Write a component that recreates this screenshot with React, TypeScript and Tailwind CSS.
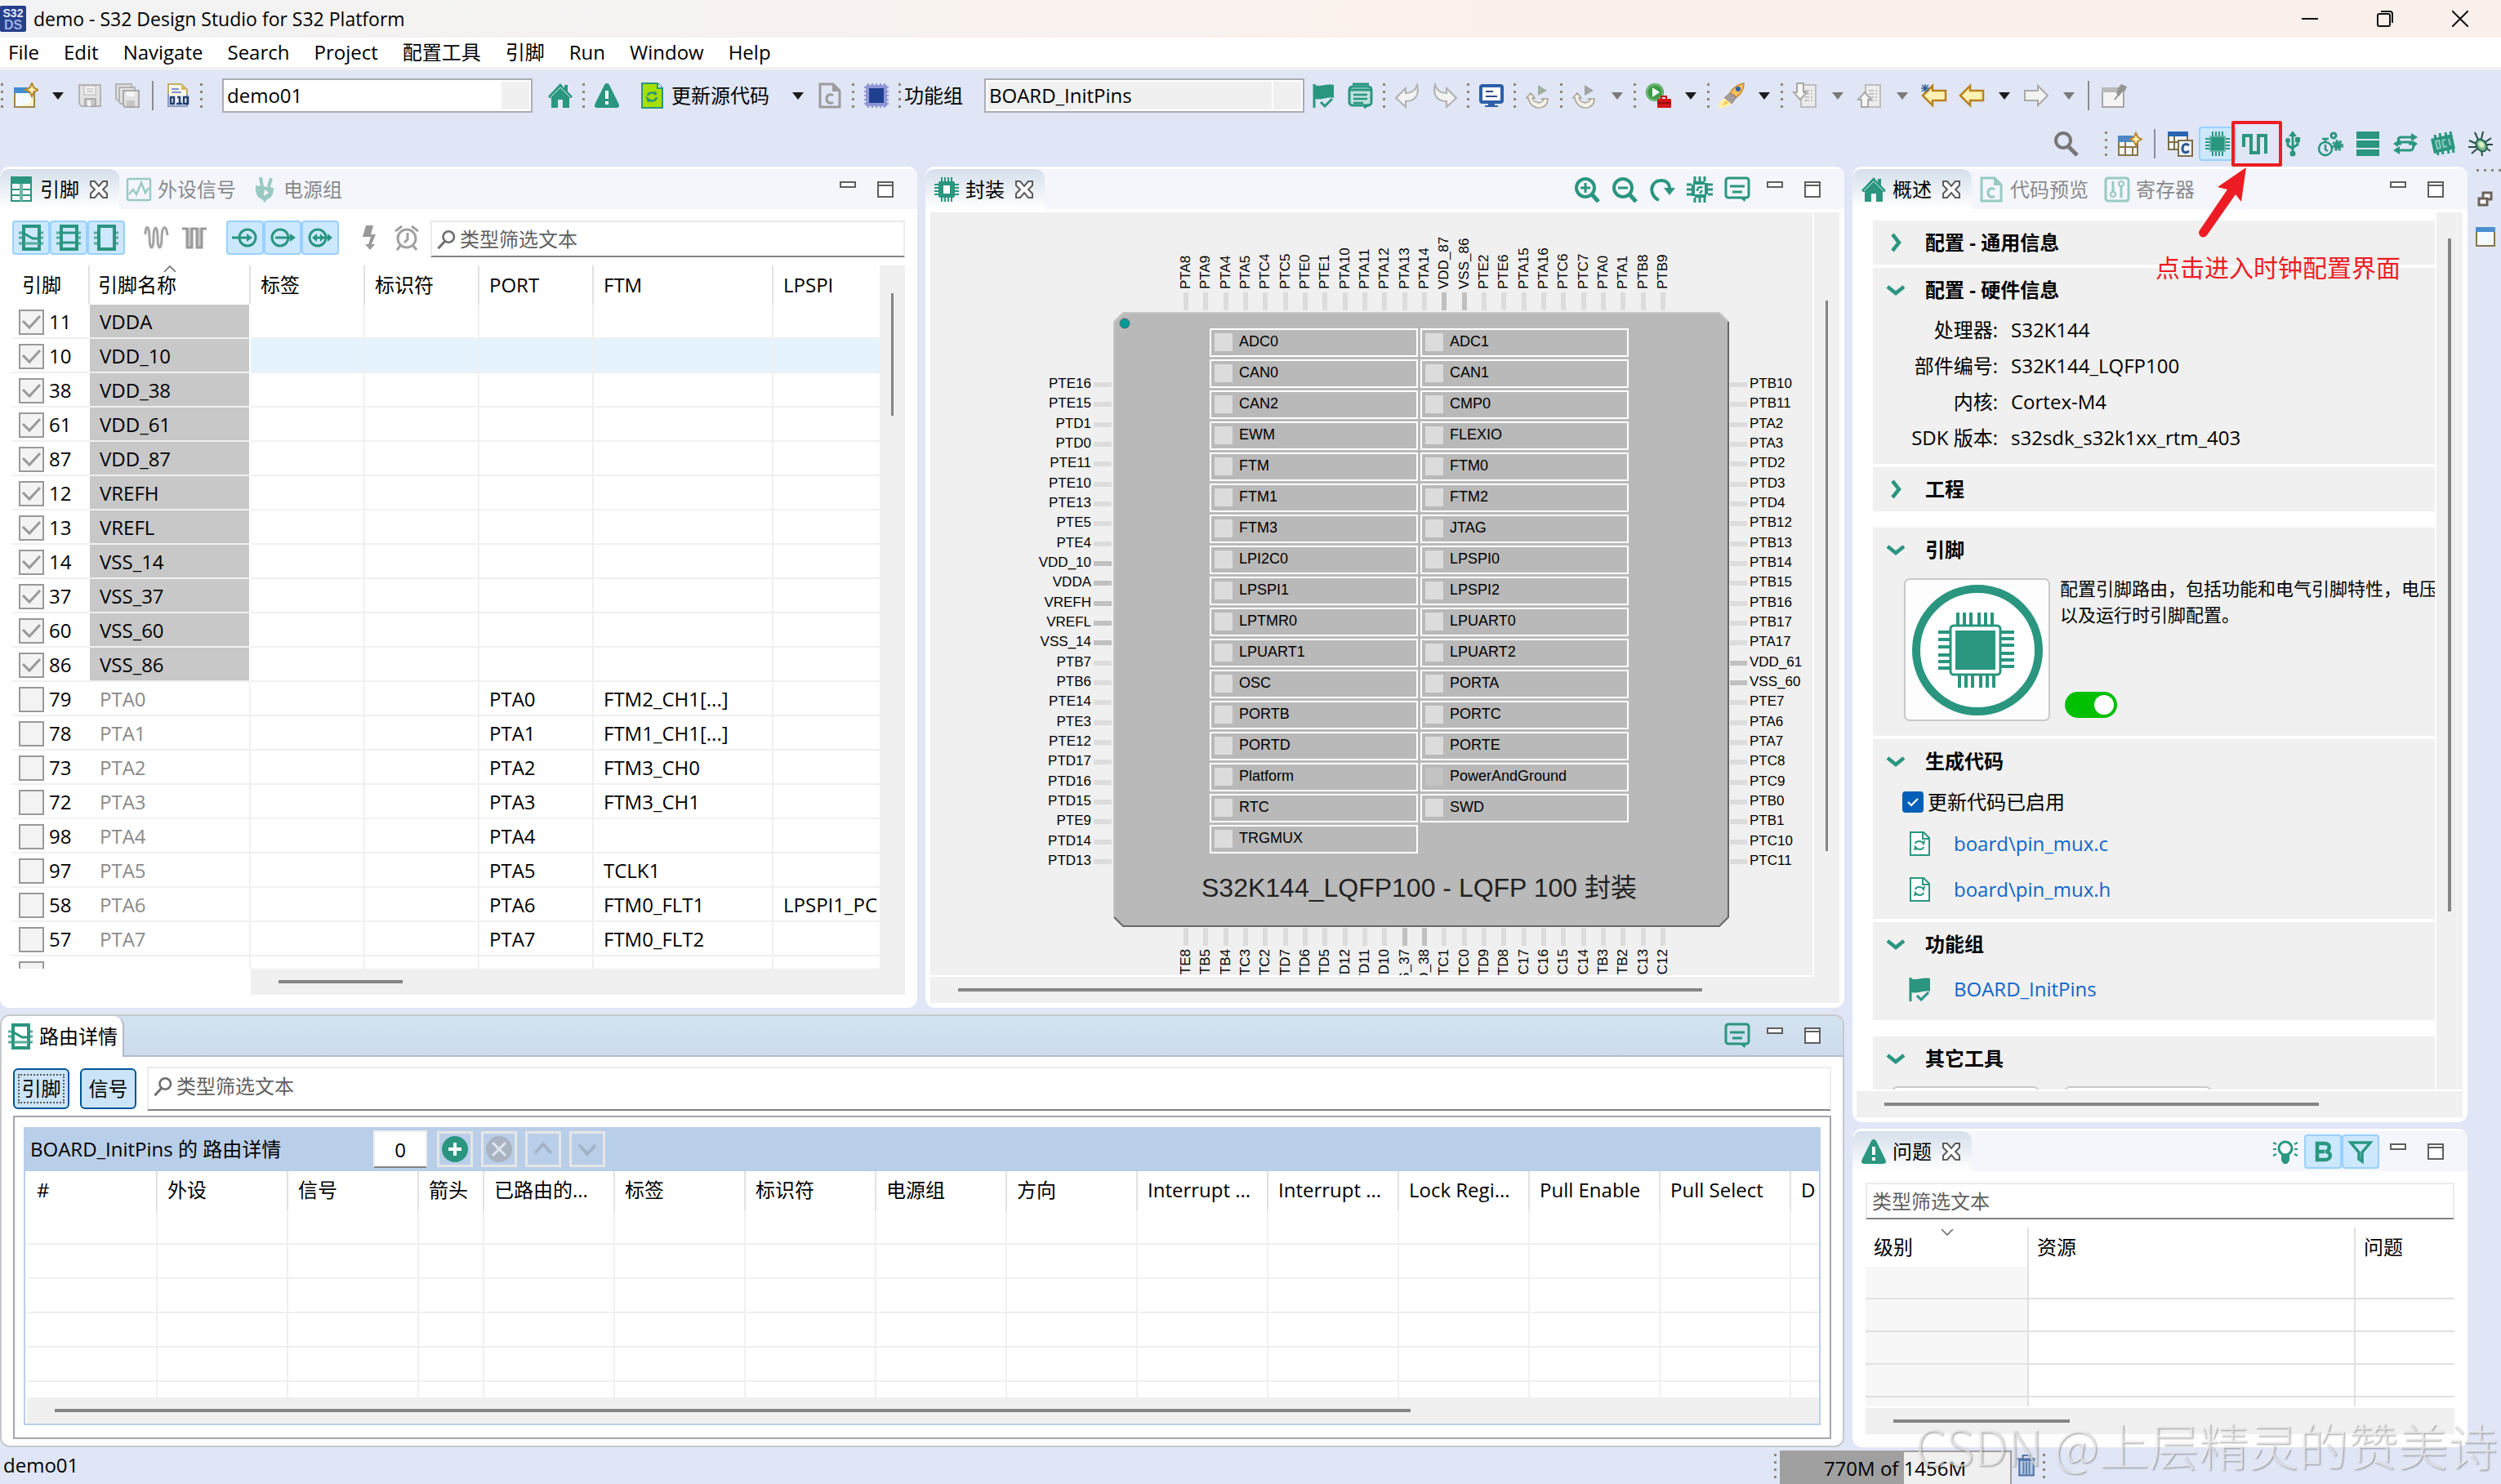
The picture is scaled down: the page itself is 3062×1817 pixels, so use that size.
import React from 'react';

const TEAL = '#2a967f';

interface IconProps {
  children: React.ReactNode;
  className?: string;
}

const Icon: React.FC<IconProps> = ({ children, className = 'size-8' }) => (
  <svg viewBox="0 0 32 32" fill="none" className={`shrink-0 ${className}`} aria-hidden="true">
    {children}
  </svg>
);

/* ---------- icons ---------- */

const AppLogo = () => (
  <svg viewBox="0 0 32 32" className="size-8 shrink-0" aria-hidden="true">
    <rect width="32" height="32" rx="2" fill="#27408b" />
    <text x="16" y="14" fontSize="14" fontWeight="700" fill="#e4eaff" textAnchor="middle" fontFamily="Liberation Sans, sans-serif">S32</text>
    <text x="16" y="29" fontSize="16" fontWeight="700" fill="#9fb0e6" textAnchor="middle" fontFamily="Liberation Sans, sans-serif">DS</text>
  </svg>
);

const NewIcon = () => (
  <Icon>
    <rect x="3" y="7" width="24" height="23" fill="#f4fbff" stroke="#a08648" strokeWidth="2" />
    <rect x="2" y="6" width="26" height="7" fill="#3f8fd0" />
    <path d="M6 29c12 0 19-6 20-15v15z" fill="#fdf3cf" />
    <path d="M24 1l2.500 5.500L32 9l-5.500 2.500L24 17l-2.500-5.500L16 9l5.500-2.500z" fill="#fff0b8" stroke="#b8862a" strokeWidth="2" />
  </Icon>
);

const SaveIcon = () => (
  <Icon>
    <path d="M3 3h26v26H6l-3-3z" fill="#e2e2e2" stroke="#b4b4b4" strokeWidth="2" />
    <rect x="9" y="4" width="14" height="11" fill="#f1f1f1" stroke="#b5b5b5" />
    <path d="M12 8h8M12 11h8" stroke="#c6c6c6" strokeWidth="1.500" />
    <rect x="10" y="20" width="13" height="9" fill="#c9c9c9" stroke="#a0a0a0" strokeWidth="1.500" />
    <rect x="13" y="22" width="4" height="7" fill="#f4f4f4" />
  </Icon>
);

const SaveAllIcon = () => (
  <Icon>
    <path d="M2 2h19v20H4l-2-2z" fill="#e2e2e2" stroke="#b4b4b4" strokeWidth="2" />
    <path d="M6 6h19v20H8l-2-2z" fill="#e2e2e2" stroke="#b4b4b4" strokeWidth="2" />
    <path d="M11 10h19v20H13l-2-2z" fill="#e2e2e2" stroke="#a9a9a9" strokeWidth="2" />
    <rect x="15" y="11" width="10" height="6" fill="#f6f6f6" />
    <rect x="15" y="22" width="10" height="7" fill="#c4c4c4" />
  </Icon>
);

const BinaryIcon = () => (
  <Icon>
    <path d="M4 2h16l7 7v20H4z" fill="#fbf8ea" stroke="#c2ad6c" strokeWidth="2" />
    <path d="M20 2v7h7z" fill="#dcb85c" />
    <path d="M4 14v15h23V14" stroke="#8a9cc0" strokeWidth="2" />
    <path d="M8 8h9M8 12h12" stroke="#7d92c8" strokeWidth="2" />
    <rect x="5" y="16" width="21" height="12" fill="#f2f6ff" />
    <path d="M7 18h4v8H7zM23 18h5v8h-5zM15 18h3v8M14 26h7" stroke="#233f70" strokeWidth="2.500" />
  </Icon>
);

const HomeIcon = () => (
  <Icon>
    <path d="M16 1L1 17l2 2h2v12h8V21h6v10h8V19h2l2-2-6-6V3h-4v4z" fill={TEAL} />
    <path d="M4 18L16 6l12 12" stroke="#dff1ec" strokeWidth="1" />
  </Icon>
);

const WarnIcon = () => (
  <Icon>
    <path d="M16 1c2 0 3 2 4 4l10 20c2 4 1 6-3 6H5c-4 0-5-2-3-6L12 5c1-2 2-4 4-4z" fill={TEAL} />
    <path d="M16 10v10M16 23v4" stroke="#fff" strokeWidth="4" />
  </Icon>
);

const UpdateDocIcon = () => (
  <Icon>
    <path d="M4 1h19l6 6v24H4z" fill="#a6e000" stroke={TEAL} strokeWidth="2" />
    <path d="M23 1v6h6" fill="#fff" stroke={TEAL} strokeWidth="2" />
    <path d="M11 16c1-4 7-5 10-1l-1-4M22 18c-1 5-7 6-11 2l1 4" stroke={TEAL} strokeWidth="2.500" />
  </Icon>
);

const FileCIcon: React.FC<{ color?: string }> = ({ color = '#9c9c9c' }) => (
  <Icon>
    <path d="M4 2h16l8 8v20H4z" stroke={color} strokeWidth="3" />
    <path d="M20 2v8h8" fill={color} stroke={color} strokeWidth="2" />
    <path d="M20 16c-2-2-8-2-8 4s6 6 8 4" stroke={color} strokeWidth="3" />
  </Icon>
);

const BlueChipIcon = () => (
  <Icon>
    <path d="M3 3h26v26H3z" fill="#8f95d6" />
    <path d="M6 1v30M11 1v30M16 1v30M21 1v30M26 1v30M1 6h30M1 11h30M1 16h30M1 21h30M1 26h30" stroke="#8f95d6" strokeWidth="2" />
    <rect x="7" y="7" width="18" height="18" fill="#1f3f8f" />
  </Icon>
);

const FlagIcon = () => (
  <Icon>
    <path d="M5 2v29" stroke={TEAL} strokeWidth="3" />
    <path d="M5 3c8 3 14-2 24 0v16c-8-2-14 3-24 1z" fill={TEAL} />
    <path d="M13 24l5 5 9-9" stroke="#e0e6f6" strokeWidth="6" />
    <path d="M13 24l5 5 9-9" stroke={TEAL} strokeWidth="3" />
  </Icon>
);

const ScrollIcon = () => (
  <Icon>
    <rect x="2" y="5" width="27" height="23" rx="4" fill="#bfe0dc" stroke={TEAL} strokeWidth="3" />
    <path d="M6 2h20M20 31l6-4" stroke={TEAL} strokeWidth="3" />
    <path d="M2 9h27" stroke={TEAL} strokeWidth="3" />
    <path d="M7 15h17M7 20h17M7 25h12" stroke={TEAL} strokeWidth="2.500" />
  </Icon>
);

const UndoIcon = () => (
  <Icon>
    <path d="M2 19L14 7v6c8 0 12-3 14-10 3 12-2 20-14 20v7z" fill="#f2f2f2" stroke="#b0b0b0" strokeWidth="2" />
  </Icon>
);

const RedoIcon = () => (
  <Icon>
    <path d="M30 19L18 7v6C10 13 6 10 4 3 1 15 6 23 18 23v7z" fill="#f2f2f2" stroke="#b0b0b0" strokeWidth="2" />
  </Icon>
);

const MonitorIcon = () => (
  <Icon>
    <rect x="3" y="4" width="26" height="20" rx="2" fill="#fff" stroke="#2e5fa8" strokeWidth="4" />
    <path d="M9 11h9M9 17h14" stroke="#2e4a8c" strokeWidth="2" />
    <path d="M12 26h8v2h4v2H8v-2h4z" fill="#2e5fa8" />
  </Icon>
);

const RelaunchIcon: React.FC<{ tint?: string }> = ({ tint = '#9fb09f' }) => (
  <Icon>
    <path d="M16 3v13l11-6z" fill={tint} />
    <path d="M2 19l5-6 5 6H9c1 6 11 8 14 2l-3-1h8c0 14-20 16-24-1z" fill="#f4f1ea" stroke="#a9a294" strokeWidth="1.500" />
  </Icon>
);

const RunIcon = () => (
  <Icon>
    <circle cx="12" cy="12" r="11" fill="#3f9a46" />
    <circle cx="12" cy="12" r="9.500" stroke="#7fc184" strokeWidth="1.500" />
    <path d="M9 6v12l9-6z" fill="#fff" />
    <path d="M20 20v-3h6v3" stroke="#c81010" strokeWidth="2" />
    <rect x="15" y="20" width="17" height="11" rx="1" fill="#d01818" />
    <path d="M15 25h17" stroke="#7a0c0c" strokeWidth="1.500" />
  </Icon>
);

const RocketIcon = () => (
  <Icon>
    <path d="M14 13C18 6 24 2 31 1c0 7-3 13-9 17z" fill="#f7bd5c" stroke="#c98a2e" strokeWidth="1.500" />
    <path d="M14 13l8 5-6 8-9-7z" fill="#a79c9c" stroke="#857b7b" />
    <path d="M7 19l9 7-7 4-9 2 1-7z" fill="#fff2a8" />
    <path d="M9 22l3 3-8 4z" fill="#f6c843" />
    <circle cx="24" cy="8" r="3" fill="#2f62a0" />
  </Icon>
);

const NextNoteIcon: React.FC<{ up?: boolean }> = ({ up = false }) => (
  <Icon>
    <rect x="11" y="3" width="18" height="27" fill="#ececec" stroke="#bdbdbd" strokeWidth="2" />
    <path d="M15 10h10M15 14h10M15 18h10M15 22h10" stroke="#c4c4c4" strokeWidth="2" strokeDasharray="6 2" />
    {up ? (
      <path d="M10 12l8 9h-4v9H6v-9H2z" fill="#f7f7f7" stroke="#a9a9a9" strokeWidth="2" />
    ) : (
      <path d="M6 1h8v11h4l-8 9-8-9h4z" fill="#f7f7f7" stroke="#a9a9a9" strokeWidth="2" />
    )}
  </Icon>
);

const ArrowIcon: React.FC<{ kind: 'last' | 'back' | 'forward' }> = ({ kind }) => (
  <Icon>
    {kind === 'forward' ? (
      <path d="M30 16L18 4v6H2v12h16v6z" fill="#f2f2f2" stroke="#a9a9a9" strokeWidth="2" />
    ) : (
      <path d="M2 16L14 4v6h16v12H14v6z" fill="#fff1b4" stroke="#b8821c" strokeWidth="2.500" />
    )}
    {kind === 'last' && <path d="M5 2v10M0 7h10M1 3l8 8M9 3l-8 8" stroke="#35608f" strokeWidth="1.500" />}
  </Icon>
);

const PinWindowIcon = () => (
  <Icon>
    <rect x="2" y="7" width="26" height="23" fill="#f4f4f4" stroke="#a6a6a6" strokeWidth="2" />
    <rect x="1" y="6" width="28" height="6" fill="#b9b9b9" />
    <path d="M25 2l7 3-2 5-4 2-4 5-3-4 2-6z" fill="#949494" />
    <path d="M23 13l-6 8" stroke="#949494" strokeWidth="2" />
  </Icon>
);

const SearchIcon = () => (
  <Icon>
    <circle cx="12" cy="12" r="9" stroke="#777" strokeWidth="4" />
    <path d="M18 19l11 11" stroke="#777" strokeWidth="5" />
  </Icon>
);

const OpenPerspectiveIcon = () => (
  <Icon>
    <rect x="3" y="8" width="23" height="22" fill="#f4fbff" stroke="#8a744a" strokeWidth="2" />
    <rect x="2" y="6" width="18" height="8" fill="#4b88c8" />
    <path d="M3 20h23M11 14v16M20 20v10" stroke="#8a744a" strokeWidth="2" />
    <path d="M24 3l2.500 5L31 10.500 26.500 13 24 18l-2.500-5L17 10.500 21.500 8z" fill="#fff0b8" stroke="#b8862a" strokeWidth="2" />
  </Icon>
);

const CPerspectiveIcon = () => (
  <Icon>
    <rect x="2" y="2" width="23" height="21" fill="#f4fbff" stroke="#7c6c4a" strokeWidth="2" />
    <rect x="1" y="1" width="25" height="6" fill="#2765b0" />
    <path d="M2 14h12M9 7v16" stroke="#7c6c4a" strokeWidth="2" />
    <rect x="14" y="12" width="17" height="19" fill="#eef5ff" stroke="#7c6c4a" strokeWidth="2" />
    <path d="M27 18c-4-3-8-1-8 4s4 6 8 3" stroke="#2b5590" strokeWidth="3" />
  </Icon>
);

const ChipIcon: React.FC<{ hollow?: boolean }> = ({ hollow = false }) => (
  <Icon>
    <path d="M10 1v30M14 1v30M18 1v30M22 1v30M1 10h30M1 14h30M1 18h30M1 22h30" stroke={TEAL} strokeWidth="2" />
    <rect x="6" y="6" width="20" height="20" rx="2" fill={TEAL} />
    {hollow ? (
      <rect x="12" y="11" width="8" height="10" fill="#fff" />
    ) : (
      <rect x="7" y="7" width="18" height="18" stroke="#9ad0d0" strokeWidth="1" />
    )}
  </Icon>
);

const SquareWaveIcon = () => (
  <Icon>
    <path d="M2 20V6h9v21h9V6h9v22" stroke={TEAL} strokeWidth="4" />
  </Icon>
);

const UsbIcon = () => (
  <Icon>
    <path d="M16 4v22M10 13v5l6 4M22 11v6l-6 4" stroke={TEAL} strokeWidth="3" />
    <path d="M11 7l5-7 5 7z" fill={TEAL} />
    <circle cx="16" cy="28" r="3.500" fill={TEAL} />
    <circle cx="10" cy="12" r="3" fill={TEAL} />
    <rect x="19" y="8" width="6" height="6" fill={TEAL} />
  </Icon>
);

const ClockGearIcon = () => (
  <Icon>
    <circle cx="10" cy="22" r="8" stroke={TEAL} strokeWidth="2.500" />
    <path d="M10 17v6l3 2M6 10h8M10 9v5" stroke={TEAL} strokeWidth="2.500" />
    <circle cx="25" cy="18" r="5" fill={TEAL} />
    <circle cx="25" cy="18" r="6" stroke={TEAL} strokeWidth="2" strokeDasharray="3 2" />
    <circle cx="20" cy="6" r="3" stroke={TEAL} strokeWidth="3" />
  </Icon>
);

const BarsIcon = () => (
  <Icon>
    <path d="M2 1h28v9H2zM2 12h28v9H2zM2 23h28v8H2z" fill={TEAL} />
  </Icon>
);

const RouteIcon = () => (
  <Icon>
    <path d="M26 8H11c-5 0-5 6 0 6h11c5 0 5 10 0 10H6M4 16h7M20 16h6" stroke={TEAL} strokeWidth="3" />
    <path d="M23 3l8 5-8 5zM9 19l-8 5 8 5zM25 12l6 4-6 5zM7 12l-6 4 6 4z" fill={TEAL} />
  </Icon>
);

const MemoryIcon = () => (
  <Icon>
    <path d="M6 5l4 25M12 3l4 26M19 2l4 26M25 1l4 26" stroke={TEAL} strokeWidth="3" />
    <path d="M1 10l26-6 4 18-26 6z" fill={TEAL} />
    <path d="M7 13l2 9 4-1-2-9zM15 12l2 8 4-1M15 12l4-1M23 10l2 8" stroke="#8fcabc" strokeWidth="2" />
  </Icon>
);

const BugIcon = () => (
  <Icon>
    <path d="M2 12l9 4M1 20h10M5 28l7-6M9 2l4 9M19 1l-2 9M29 9l-9 6M31 17H21M28 25l-7-5M18 31l-1-8" stroke="#2c4a44" strokeWidth="2" />
    <ellipse cx="17" cy="18" rx="6" ry="8" transform="rotate(-35 17 18)" fill="#7fb98a" stroke="#1d6152" strokeWidth="2" />
    <ellipse cx="17" cy="17" rx="3" ry="4" transform="rotate(-35 17 17)" fill="#dcf0c8" />
  </Icon>
);

const GridTabIcon = () => (
  <Icon>
    <rect x="4" y="2" width="24" height="28" fill="#fff" stroke={TEAL} strokeWidth="2" />
    <rect x="3" y="0" width="26" height="9" fill={TEAL} />
    <path d="M3 16h26M3 23h26" stroke={TEAL} strokeWidth="2" />
    <path d="M16 9v21" stroke="#6fb8a8" strokeWidth="4" />
  </Icon>
);

const SignalTabIcon = () => (
  <Icon>
    <rect x="2" y="3" width="28" height="26" rx="2" stroke={TEAL} strokeWidth="2.500" />
    <path d="M4 22l5-6 4 6 6-14 5 12 4-6" stroke={TEAL} strokeWidth="2.500" />
  </Icon>
);

const PlugTabIcon = () => (
  <Icon>
    <path d="M11 1l2 12M24 2l-3 11" stroke={TEAL} strokeWidth="4" />
    <path d="M5 11l22 3c0 8-3 13-8 14l-3 4-3-4C8 27 4 21 5 11z" fill={TEAL} />
    <path d="M16 16l5 4-6 4z" fill="#fff" />
  </Icon>
);

const RegisterTabIcon = () => (
  <Icon>
    <rect x="2" y="2" width="28" height="28" rx="3" stroke={TEAL} strokeWidth="3" />
    <path d="M11 6v14M21 12v14" stroke={TEAL} strokeWidth="3" />
    <circle cx="11" cy="22" r="3" stroke={TEAL} strokeWidth="2" />
    <circle cx="21" cy="9" r="3" stroke={TEAL} strokeWidth="2" />
  </Icon>
);

const RouteBoxIcon: React.FC<{ kind: 'routed' | 'all' | 'none' }> = ({ kind }) => (
  <Icon>
    <path d="M1 10h6M1 16h6M1 23h6M25 10h6M25 16h6M25 23h6" stroke="#55ac9a" strokeWidth="3" />
    <rect x="7" y="2" width="19" height="28" stroke={TEAL} strokeWidth="4" />
    {kind === 'routed' && (
      <>
        <path d="M8 23h18" stroke="#55ac9a" strokeWidth="3" />
        <path d="M6 10l12 7h8" stroke={TEAL} strokeWidth="3" />
      </>
    )}
    {kind === 'all' && <path d="M7 10h19M7 22h19" stroke={TEAL} strokeWidth="3" />}
  </Icon>
);

const SineIcon = () => (
  <Icon>
    <path d="M2 12c0-12 5-12 5 4s5 16 5 0 5-16 5 0 5 16 5 0 6-16 7-3" stroke="#a3a3a3" strokeWidth="3" />
  </Icon>
);

const GreyWaveIcon = () => (
  <Icon>
    <path d="M7 4h5v25H7zM19 4h6v25h-6z" fill="#c4c4c4" />
    <path d="M1 5h6v23h6V5h6v23h6V5h6" stroke="#999" strokeWidth="3" />
  </Icon>
);

const DirectionIcon: React.FC<{ kind: 'in' | 'out' | 'both' }> = ({ kind }) => (
  <Icon>
    <circle cx={kind === 'in' ? 19 : 13} cy="16" r="10" stroke={TEAL} strokeWidth="3" />
    {kind === 'in' && (
      <>
        <path d="M0 16h21" stroke={TEAL} strokeWidth="3" />
        <path d="M18 11l7 5-7 5z" fill={TEAL} />
      </>
    )}
    {kind === 'out' && (
      <>
        <path d="M7 16h20" stroke={TEAL} strokeWidth="3" />
        <path d="M25 11l7 5-7 5z" fill={TEAL} />
      </>
    )}
    {kind === 'both' && (
      <>
        <path d="M8 16h19" stroke={TEAL} strokeWidth="3" />
        <path d="M25 11l6 5-6 5zM12 11l-6 5 6 5zM16 11l5 5-5 5z" fill={TEAL} />
      </>
    )}
  </Icon>
);

const FlashIcon = () => (
  <Icon>
    <path d="M12 1h9l-3 11h6l-5 12h4l-6 7-6-7h4l3-9H8z" fill="#999" />
  </Icon>
);

const AlarmIcon = () => (
  <Icon>
    <circle cx="16" cy="17" r="11" stroke="#a0a0a0" strokeWidth="3" />
    <path d="M17 10v8l-4 4M2 8l8-6M30 8l-8-6M8 26l-4 5M24 26l4 5" stroke="#a0a0a0" strokeWidth="3" />
  </Icon>
);

const FindIcon = () => (
  <Icon className="size-6">
    <circle cx="19" cy="12" r="9" stroke="#6f6f6f" strokeWidth="3.500" />
    <path d="M13 19L2 31" stroke="#6f6f6f" strokeWidth="4" />
  </Icon>
);

const ZoomIcon: React.FC<{ plus?: boolean }> = ({ plus = false }) => (
  <Icon>
    <circle cx="14" cy="14" r="11" stroke={TEAL} strokeWidth="4" />
    <path d="M22 22l8 9" stroke={TEAL} strokeWidth="5" />
    <path d={plus ? 'M8 14h12M14 8v12' : 'M8 14h12'} stroke={TEAL} strokeWidth="3" />
  </Icon>
);

const RotateIcon = () => (
  <Icon>
    <path d="M12 29C-1 23 1 5 15 5c6 0 10 4 10 10" stroke={TEAL} strokeWidth="4" />
    <path d="M18 14h14l-7 9z" fill={TEAL} />
  </Icon>
);

const ChipResetIcon = () => (
  <Icon>
    <path d="M10 0v6M16 0v6M22 0v6M10 26v6M16 26v6M22 26v6M0 10h6M0 16h6M0 22h6M26 10h6M26 16h6M26 22h6" stroke={TEAL} strokeWidth="3" />
    <rect x="8" y="8" width="16" height="16" stroke={TEAL} strokeWidth="4" strokeDasharray="14 2" />
    <path d="M13 18c0-5 4-6 6-4M19 17l-3 4" stroke={TEAL} strokeWidth="2.500" />
  </Icon>
);

const NoteIcon = () => (
  <Icon>
    <rect x="2" y="2" width="28" height="24" rx="3" stroke={TEAL} strokeWidth="3" />
    <path d="M19 26h8l-2 5z" fill={TEAL} />
    <path d="M7 12h18M10 19h12" stroke={TEAL} strokeWidth="3" />
  </Icon>
);

const BulbIcon = () => (
  <Icon>
    <circle cx="16" cy="12" r="8" stroke={TEAL} strokeWidth="3" />
    <path d="M11 20h10v7l-3 4h-4l-3-4z" fill={TEAL} />
    <path d="M1 5l4 2M1 13h4M1 21l4-2M31 5l-4 2M31 13h-4M31 21l-4-2" stroke={TEAL} strokeWidth="2" />
  </Icon>
);

const BoldIcon = () => (
  <Icon>
    <path d="M9 6h9c8 0 7 9 1 10 8 0 8 10-1 10H9zM9 16h9" stroke={TEAL} strokeWidth="4.500" />
  </Icon>
);

const FunnelIcon = () => (
  <Icon>
    <path d="M4 5h24L18 17v11l-4-3v-8z" stroke={TEAL} strokeWidth="3.500" />
  </Icon>
);

const CloseIcon = () => (
  <svg viewBox="0 0 22 22" fill="none" className="size-[22px]" aria-hidden="true">
    <path d="M1 1h5l5 6 5-6h5v5l-5 5 5 5v5h-5l-5-6-5 6H1v-5l5-5-5-5z" fill="#fff" stroke="#5c5c5c" strokeWidth="2" />
  </svg>
);

const MinIcon = () => (
  <svg viewBox="0 0 22 22" className="size-[22px]" aria-hidden="true">
    <rect x="2" y="2" width="18" height="6" fill="#fff" stroke="#5f5f5f" strokeWidth="2" />
  </svg>
);

const MaxIcon = () => (
  <svg viewBox="0 0 22 22" className="size-[22px]" aria-hidden="true">
    <rect x="2" y="2" width="18" height="18" fill="#fff" stroke="#5f5f5f" strokeWidth="2" />
    <path d="M2 6h18" stroke="#5f5f5f" strokeWidth="2" />
  </svg>
);

const Chevron: React.FC<{ open: boolean }> = ({ open }) => (
  <svg viewBox="0 0 24 24" fill="none" className="size-6 shrink-0" aria-hidden="true">
    <path d={open ? 'M2 8l10 8 10-8' : 'M8 2l8 10-8 10'} stroke={TEAL} strokeWidth="4.500" />
  </svg>
);

/* ---------- toolbar parts ---------- */

interface ToolProps {
  label: string;
  children: React.ReactNode;
  active?: boolean;
}

const Tool: React.FC<ToolProps> = ({ label, children, active = false }) => (
  <button
    type="button"
    aria-label={label}
    className={`flex h-[42px] w-[46px] shrink-0 items-center justify-center ${
      active ? 'rounded-sm border-2 border-[#99d1ff] bg-[#cce8ff]' : ''
    }`}
  >
    {children}
  </button>
);

const Caret: React.FC<{ dim?: boolean }> = ({ dim = false }) => (
  <button type="button" aria-label="More" className="flex h-[42px] w-[33px] shrink-0 items-center justify-center">
    <svg viewBox="0 0 14 9" className="h-[9px] w-3.5" aria-hidden="true">
      <path d="M0 0h14L7 9z" fill={dim ? '#7a7a7a' : '#1c1c1c'} />
    </svg>
  </button>
);

const Handle = () => (
  <span className="flex w-[11px] shrink-0 flex-col items-center gap-1.5">
    <span className="size-[3px] bg-[#8d8878]" />
    <span className="size-[3px] bg-[#8d8878]" />
    <span className="size-[3px] bg-[#8d8878]" />
    <span className="size-[3px] bg-[#8d8878]" />
  </span>
);

const Divider = () => (
  <span className="flex w-4 shrink-0 justify-center">
    <span className="h-9 w-0.5 bg-[#8a8d96]" />
  </span>
);

const TitleBar = () => (
  <header className="flex h-[46px] shrink-0 items-center bg-linear-to-r from-[#f2f3f4] to-[#faf0eb] to-60%">
    <AppLogo />
    <h1 className="ml-[9px] flex-1 text-[23px] leading-8">demo - S32 Design Studio for S32 Platform</h1>
    <button type="button" aria-label="Minimize" className="flex w-[92px] justify-center">
      <svg viewBox="0 0 20 20" className="size-5"><path d="M0 10h20" stroke="#111" strokeWidth="2" /></svg>
    </button>
    <button type="button" aria-label="Restore" className="flex w-[92px] justify-center">
      <svg viewBox="0 0 20 20" fill="none" className="size-5">
        <rect x="1" y="4" width="15" height="15" rx="2" stroke="#111" strokeWidth="2" />
        <path d="M5 1h11a3 3 0 0 1 3 3v11" stroke="#111" strokeWidth="2" />
      </svg>
    </button>
    <button type="button" aria-label="Close" className="mr-1 flex w-[92px] justify-center">
      <svg viewBox="0 0 20 20" className="size-5"><path d="M0 0l20 20M20 0L0 20" stroke="#111" strokeWidth="2" /></svg>
    </button>
  </header>
);

const MENUS = ['File', 'Edit', 'Navigate', 'Search', 'Project', '配置工具', '引脚', 'Run', 'Window', 'Help'];

const MenuBar = () => (
  <nav className="flex h-10 shrink-0 items-center gap-[30px] border-b-4 border-[#f0f0f0] bg-white pl-2.5">
    {MENUS.map((menu) => (
      <button key={menu} type="button" className="text-[24px] leading-8">
        {menu}
      </button>
    ))}
  </nav>
);

const MainToolbar = () => (
  <div className="-ml-[3px] flex h-[62px] shrink-0 items-center">
    <Handle />
    <Tool label="New"><NewIcon /></Tool>
    <Caret />
    <Tool label="Save"><SaveIcon /></Tool>
    <Tool label="Save all"><SaveAllIcon /></Tool>
    <Divider />
    <Tool label="Binary"><BinaryIcon /></Tool>
    <Handle />
    <div className="ml-5 flex h-[42px] w-[380px] border-2 border-[#abadb3] bg-white p-0.5">
      <select aria-label="Project" className="flex-1 appearance-none px-0.5 text-[24px] leading-8 outline-none">
        <option>demo01</option>
      </select>
      <span className="w-[34px] bg-[#f0f0f0]" />
    </div>
    <span className="w-[11px] shrink-0" />
    <Tool label="Home"><HomeIcon /></Tool>
    <Handle />
    <Tool label="Problems"><WarnIcon /></Tool>
    <button type="button" className="flex h-[42px] items-center gap-2 pr-[18px] pl-4 text-[24px] leading-8">
      <UpdateDocIcon />
      更新源代码
    </button>
    <Caret />
    <Tool label="Code preview"><FileCIcon /></Tool>
    <Handle />
    <Tool label="Processor"><BlueChipIcon /></Tool>
    <Handle />
    <label htmlFor="func-group" className="text-[24px] leading-8 whitespace-nowrap">功能组</label>
    <div className="ml-[26px] flex h-[42px] w-[392px] gap-0.5 border-2 border-[#abadb3] bg-white p-0.5">
      <select id="func-group" className="flex-1 appearance-none bg-[#f0f0f0] px-0.5 text-[24px] leading-8 outline-none">
        <option>BOARD_InitPins</option>
      </select>
      <span className="w-[34px] bg-[#f0f0f0]" />
    </div>
    <Tool label="Default group"><FlagIcon /></Tool>
    <Tool label="Group properties"><ScrollIcon /></Tool>
    <Handle />
    <Tool label="Undo"><UndoIcon /></Tool>
    <Tool label="Redo"><RedoIcon /></Tool>
    <Handle />
    <Tool label="Console"><MonitorIcon /></Tool>
    <Handle />
    <Tool label="Relaunch"><RelaunchIcon /></Tool>
    <Handle />
    <Tool label="Relaunch last"><RelaunchIcon tint="#a3a3a3" /></Tool>
    <Caret dim />
    <Handle />
    <Tool label="External tools"><RunIcon /></Tool>
    <Caret />
    <Handle />
    <Tool label="Flash"><RocketIcon /></Tool>
    <Caret />
    <Handle />
    <Tool label="Next annotation"><NextNoteIcon /></Tool>
    <Caret dim />
    <Tool label="Previous annotation"><NextNoteIcon up /></Tool>
    <Caret dim />
    <Tool label="Last edit"><ArrowIcon kind="last" /></Tool>
    <Tool label="Back"><ArrowIcon kind="back" /></Tool>
    <Caret />
    <Tool label="Forward"><ArrowIcon kind="forward" /></Tool>
    <Caret dim />
    <Divider />
    <Tool label="Pin editor"><PinWindowIcon /></Tool>
  </div>
);

const ClockCallout = () => (
  <div className="pointer-events-none absolute -top-[7px] -left-1.5 z-10">
    <div className="h-14 w-[62px] rounded-xs border-4 border-[#ed1c24]" />
    <svg viewBox="0 0 70 90" className="absolute top-14 -left-11 h-[90px] w-[70px]" aria-hidden="true">
      <path d="M62 1L56 43 49 34 14 84a5 5 0 0 1-9-6L39 28 27 25z" fill="#ed1c24" />
    </svg>
    <p className="absolute top-[160px] -left-[93px] text-[30px] leading-10 whitespace-nowrap text-[#ed1c24]">
      点击进入时钟配置界面
    </p>
  </div>
);

const PerspectiveBar = () => (
  <div className="flex h-14 shrink-0 items-center justify-end pr-0.5">
    <Tool label="Search"><SearchIcon /></Tool>
    <span className="w-5" />
    <Handle />
    <Tool label="Open perspective"><OpenPerspectiveIcon /></Tool>
    <Divider />
    <Tool label="C/C++"><CPerspectiveIcon /></Tool>
    <Tool label="Pins" active><ChipIcon /></Tool>
    <div className="relative">
      <Tool label="Clocks"><SquareWaveIcon /></Tool>
      <ClockCallout />
    </div>
    <Tool label="Peripherals"><UsbIcon /></Tool>
    <Tool label="Timing"><ClockGearIcon /></Tool>
    <Tool label="Memory"><BarsIcon /></Tool>
    <Tool label="Routing"><RouteIcon /></Tool>
    <Tool label="DCD"><MemoryIcon /></Tool>
    <Tool label="Debug"><BugIcon /></Tool>
  </div>
);

/* ---------- panes ---------- */

interface TabData {
  title: string;
  icon: React.ReactNode;
}

interface PaneProps {
  tabs: TabData[];
  actions?: React.ReactNode;
  children: React.ReactNode;
}

const Pane: React.FC<PaneProps> = ({ tabs, actions, children }) => (
  <section className="flex min-h-0 min-w-0 flex-col overflow-hidden rounded-xl bg-white">
    <div className="flex h-[52px] shrink-0 border-t-3 border-white bg-[#f4f6fc]">
      <div className="flex items-center rounded-t-xl bg-linear-to-b from-[#d5dfeb] to-white pr-3.5 pl-2.5">
        {tabs[0].icon}
        <h2 className="ml-[7px] text-[24px] leading-8">{tabs[0].title}</h2>
        <button type="button" aria-label="Close tab" className="ml-[13px]"><CloseIcon /></button>
      </div>
      {tabs.slice(1).map((tab) => (
        <button key={tab.title} type="button" className="flex items-center gap-[7px] pr-[11px] pl-2 text-[24px] leading-8 opacity-45">
          {tab.icon}
          {tab.title}
        </button>
      ))}
      <div className="ml-auto flex items-center pr-4">
        {actions}
        <Tool label="Minimize"><MinIcon /></Tool>
        <Tool label="Maximize"><MaxIcon /></Tool>
      </div>
    </div>
    {children}
  </section>
);

interface FilterProps {
  id: string;
  icon?: boolean;
  className?: string;
}

const FilterBox: React.FC<FilterProps> = ({ id, icon = false, className = 'h-[45px]' }) => (
  <label htmlFor={id} className={`flex min-w-0 flex-1 items-center gap-1 border-2 border-[#ececec] border-b-[#838383] bg-white pl-1.5 ${className}`}>
    {icon && <FindIcon />}
    <input
      id={id}
      type="text"
      placeholder="类型筛选文本"
      className="min-w-0 flex-1 text-[24px] leading-8 outline-none placeholder:text-[#5f5f5f]"
    />
  </label>
);

interface PinRow {
  pin: string;
  name: string;
  ftm?: string;
  lpspi?: string;
}

const POWER_PINS: PinRow[] = [
  { pin: '11', name: 'VDDA' },
  { pin: '10', name: 'VDD_10' },
  { pin: '38', name: 'VDD_38' },
  { pin: '61', name: 'VDD_61' },
  { pin: '87', name: 'VDD_87' },
  { pin: '12', name: 'VREFH' },
  { pin: '13', name: 'VREFL' },
  { pin: '14', name: 'VSS_14' },
  { pin: '37', name: 'VSS_37' },
  { pin: '60', name: 'VSS_60' },
  { pin: '86', name: 'VSS_86' },
];

const PORT_PINS: PinRow[] = [
  { pin: '79', name: 'PTA0', ftm: 'FTM2_CH1[...]' },
  { pin: '78', name: 'PTA1', ftm: 'FTM1_CH1[...]' },
  { pin: '73', name: 'PTA2', ftm: 'FTM3_CH0' },
  { pin: '72', name: 'PTA3', ftm: 'FTM3_CH1' },
  { pin: '98', name: 'PTA4' },
  { pin: '97', name: 'PTA5', ftm: 'TCLK1' },
  { pin: '58', name: 'PTA6', ftm: 'FTM0_FLT1', lpspi: 'LPSPI1_PC' },
  { pin: '57', name: 'PTA7', ftm: 'FTM0_FLT2' },
  { pin: '', name: '' },
];

const PIN_HEADERS = ['标签', '标识符', 'PORT', 'FTM', 'LPSPI'];

const PinTableRow: React.FC<{ row: PinRow; power: boolean }> = ({ row, power }) => {
  const cell = `h-[42px] overflow-hidden border-r-2 border-b-2 border-[#f0f0f0] pt-0.5 pl-3 whitespace-nowrap last:border-r-0 ${
    row.pin === '10' ? 'bg-[#e5f3ff]' : ''
  }`;
  return (
    <tr>
      <td className="h-[42px] border-b-2 border-[#f0f0f0] pt-0.5 pl-2">
        <label className="flex items-center gap-1.5">
          <span className="relative flex size-[31px] shrink-0">
            <input
              type="checkbox"
              aria-label={`Route ${row.name}`}
              defaultChecked={power}
              className="size-[31px] appearance-none border-2 border-[#999] bg-[#f3f3f3]"
            />
            {power && (
              <svg viewBox="0 0 31 31" fill="none" className="pointer-events-none absolute inset-0" aria-hidden="true">
                <path d="M5 14l8 8L26 8" stroke="#999" strokeWidth="3" />
              </svg>
            )}
          </span>
          {row.pin}
        </label>
      </td>
      <td
        className={`border-r-2 border-b-2 pt-0.5 pl-3 ${
          power ? 'border-r-white border-b-[#f0f0f0] bg-[#c8c8c8]' : 'border-[#f0f0f0] text-[#8a8a8a]'
        }`}
      >
        {row.name}
      </td>
      <td className={cell} />
      <td className={cell} />
      <td className={cell}>{power ? '' : row.name}</td>
      <td className={cell}>{row.ftm}</td>
      <td className={cell}>{row.lpspi}</td>
    </tr>
  );
};

const PinsPane = () => (
  <Pane
    tabs={[
      { title: '引脚', icon: <GridTabIcon /> },
      { title: '外设信号', icon: <SignalTabIcon /> },
      { title: '电源组', icon: <PlugTabIcon /> },
    ]}
  >
    <div className="flex min-h-0 flex-1 flex-col px-[15px] pt-3.5 pb-4">
      <div className="flex shrink-0">
        <Tool label="Routed" active><RouteBoxIcon kind="routed" /></Tool>
        <Tool label="All" active><RouteBoxIcon kind="all" /></Tool>
        <Tool label="Unrouted" active><RouteBoxIcon kind="none" /></Tool>
        <span className="w-4" />
        <Tool label="Analog"><SineIcon /></Tool>
        <Tool label="Digital"><GreyWaveIcon /></Tool>
        <span className="w-4" />
        <Tool label="Input" active><DirectionIcon kind="in" /></Tool>
        <Tool label="Output" active><DirectionIcon kind="out" /></Tool>
        <Tool label="Bidirectional" active><DirectionIcon kind="both" /></Tool>
        <span className="w-3.5" />
        <Tool label="Power"><FlashIcon /></Tool>
        <Tool label="Timers"><AlarmIcon /></Tool>
        <span className="w-1.5" />
        <FilterBox id="pin-filter" icon />
      </div>
      <div className="mt-2.5 flex min-h-0 flex-1">
        <div className="min-w-0 flex-1 overflow-hidden">
          <table className="w-full table-fixed border-separate border-spacing-0 text-[24px] leading-8">
            <colgroup>
              <col className="w-[95px]" />
              <col className="w-[197px]" />
              <col className="w-[140px]" />
              <col className="w-[140px]" />
              <col className="w-[140px]" />
              <col className="w-[220px]" />
              <col />
            </colgroup>
            <thead>
              <tr className="text-left">
                <th className="h-12 border-r-2 border-[#e2e2e2] pl-3 font-normal">引脚</th>
                <th className="relative border-r-2 border-[#e2e2e2] pl-2.5 font-normal">
                  引脚名称
                  <svg viewBox="0 0 16 8" fill="none" className="absolute top-0 left-[90px] h-2 w-4" aria-hidden="true">
                    <path d="M1 8l7-7 7 7" stroke="#666" strokeWidth="1.500" />
                  </svg>
                </th>
                {PIN_HEADERS.map((header) => (
                  <th key={header} className="border-r-2 border-[#e2e2e2] pl-3 font-normal last:border-r-0">
                    {header}
                  </th>
                ))}
              </tr>
            </thead>
            <tbody>
              {POWER_PINS.map((row) => <PinTableRow key={row.pin} row={row} power />)}
              {PORT_PINS.map((row) => <PinTableRow key={row.pin} row={row} power={false} />)}
            </tbody>
          </table>
        </div>
        <div className="w-[31px] shrink-0 bg-[#f0f0f0] pt-[34px]">
          <div className="mx-auto h-[150px] w-[3px] bg-[#858585]" />
        </div>
      </div>
      <div className="ml-[292px] flex h-8 shrink-0 items-center bg-[#f0f0f0] pl-[34px]">
        <div className="h-1 w-[152px] bg-[#858585]" />
      </div>
    </div>
  </Pane>
);

/* ---------- package drawing ---------- */

const TOP_PINS = 'PTA8 PTA9 PTA4 PTA5 PTC4 PTC5 PTE0 PTE1 PTA10 PTA11 PTA12 PTA13 PTA14 VDD_87 VSS_86 PTE2 PTE6 PTA15 PTA16 PTC6 PTC7 PTA0 PTA1 PTB8 PTB9'.split(' ');
const LEFT_PINS = 'PTE16 PTE15 PTD1 PTD0 PTE11 PTE10 PTE13 PTE5 PTE4 VDD_10 VDDA VREFH VREFL VSS_14 PTB7 PTB6 PTE14 PTE3 PTE12 PTD17 PTD16 PTD15 PTE9 PTD14 PTD13'.split(' ');
const RIGHT_PINS = 'PTB10 PTB11 PTA2 PTA3 PTD2 PTD3 PTD4 PTB12 PTB13 PTB14 PTB15 PTB16 PTB17 PTA17 VDD_61 VSS_60 PTE7 PTA6 PTA7 PTC8 PTC9 PTB0 PTB1 PTC10 PTC11'.split(' ');
const BOTTOM_PINS = 'PTE8 PTB5 PTB4 PTC3 PTC2 PTD7 PTD6 PTD5 PTD12 PTD11 PTD10 VSS_37 VDD_38 PTC1 PTC0 PTD9 PTD8 PTC17 PTC16 PTC15 PTC14 PTB3 PTB2 PTC13 PTC12'.split(' ');
const PERIPHERALS = 'ADC0 ADC1 CAN0 CAN1 CAN2 CMP0 EWM FLEXIO FTM FTM0 FTM1 FTM2 FTM3 JTAG LPI2C0 LPSPI0 LPSPI1 LPSPI2 LPTMR0 LPUART0 LPUART1 LPUART2 OSC PORTA PORTB PORTC PORTD PORTE Platform PowerAndGround RTC SWD TRGMUX'.split(' ');

const pinColor = (name: string) => (name.startsWith('V') ? '#c0c0c0' : '#dcdcdc');
const spread = (start: number, index: number) => Math.round(start + (index * 584) / 24);

const PackageDrawing = () => (
  <svg viewBox="0 0 1080 934" className="h-[934px] w-[1080px] shrink-0 font-['Liberation_Sans','Noto_Sans_CJK_SC',sans-serif] text-[17px]">
    {TOP_PINS.map((name, i) => {
      const x = spread(313, i);
      return (
        <g key={name}>
          <rect x={x - 3} y="98" width="6" height="22" fill={pinColor(name)} />
          <text transform={`translate(${x + 5} 94) rotate(-90)`}>{name}</text>
        </g>
      );
    })}
    {BOTTOM_PINS.map((name, i) => {
      const x = spread(313, i);
      return (
        <g key={name}>
          <rect x={x - 3} y="876" width="6" height="22" fill={pinColor(name)} />
          <text transform={`translate(${x + 5} 902) rotate(-90)`} textAnchor="end">{name}</text>
        </g>
      );
    })}
    {LEFT_PINS.map((name, i) => {
      const y = spread(211, i);
      return (
        <g key={name}>
          <rect x="200" y={y - 3} width="22" height="6" fill={pinColor(name)} />
          <text x="197" y={y + 4} textAnchor="end">{name}</text>
        </g>
      );
    })}
    {RIGHT_PINS.map((name, i) => {
      const y = spread(211, i);
      return (
        <g key={name}>
          <rect x="979" y={y - 3} width="21" height="6" fill={pinColor(name)} />
          <text x="1003" y={y + 4}>{name}</text>
        </g>
      );
    })}
    <path d="M236 123h730l11 11v729l-11 11H236l-11-11V134z" fill="#b9b9b9" />
    <path d="M225 863V134l11-11h730l11 11" fill="none" stroke="#c6c6c6" strokeWidth="2" />
    <path d="M977 134v729l-11 11H236l-11-11" fill="none" stroke="#666" strokeWidth="2" />
    <circle cx="238" cy="136" r="6" fill="#009a9a" stroke="#5a6a6a" strokeWidth="1" />
    {PERIPHERALS.map((name, i) => {
      const x = i % 2 ? 601 : 343;
      const y = 143 + Math.floor(i / 2) * 38;
      return (
        <g key={name} className="text-[18px]">
          <rect x={x} y={y} width="253" height="33" fill="none" stroke="#fff" strokeWidth="2" />
          <rect x={x + 5} y={y + 5} width="22" height="22" fill={name === 'PowerAndGround' ? '#c3c3c3' : '#dcdcdc'} />
          <text x={x + 35} y={y + 21}>{name}</text>
        </g>
      );
    })}
    <text x="332" y="838" className="text-[32px]" fill="#222">S32K144_LQFP100 - LQFP 100 封装</text>
  </svg>
);

const PackagePane = () => (
  <Pane
    tabs={[{ title: '封装', icon: <ChipIcon hollow /> }]}
    actions={
      <>
        <Tool label="Zoom in"><ZoomIcon plus /></Tool>
        <Tool label="Zoom out"><ZoomIcon /></Tool>
        <Tool label="Rotate"><RotateIcon /></Tool>
        <Tool label="Reset"><ChipResetIcon /></Tool>
        <Tool label="Legend"><NoteIcon /></Tool>
      </>
    }
  >
    <div className="flex min-h-0 flex-1 flex-col px-1.5 pt-1 pb-1.5">
      <div className="flex min-h-0 flex-1 bg-[#f0f0f0]">
        <div className="flex min-w-0 flex-1 overflow-hidden border-r-2 border-b-2 border-white">
          <PackageDrawing />
        </div>
        <div className="w-[31px] shrink-0 pt-[108px]">
          <div className="mx-auto h-[674px] w-[3px] bg-[#858585]" />
        </div>
      </div>
      <div className="flex h-8 shrink-0 items-center bg-[#f0f0f0] pr-[168px] pl-[34px]">
        <div className="h-1 flex-1 bg-[#858585]" />
      </div>
    </div>
  </Pane>
);

/* ---------- overview ---------- */

interface SectionProps {
  title: string;
  open?: boolean;
  className?: string;
  children?: React.ReactNode;
}

const Section: React.FC<SectionProps> = ({ title, open = true, className = '', children }) => (
  <div className={`shrink-0 bg-[#f0f0f0] ${className}`}>
    <button type="button" aria-expanded={open} className="flex h-[54px] items-center gap-6 pl-4 text-[24px] leading-8 font-bold">
      <Chevron open={open} />
      {title}
    </button>
    {children}
  </div>
);

const HARDWARE = [
  ['处理器:', 'S32K144'],
  ['部件编号:', 'S32K144_LQFP100'],
  ['内核:', 'Cortex-M4'],
  ['SDK 版本:', 's32sdk_s32k1xx_rtm_403'],
];

const CpuBadge = () => (
  <svg viewBox="0 0 179 175" fill="none" className="h-[175px] w-[179px] shrink-0" aria-hidden="true">
    <rect x="1" y="1" width="177" height="173" rx="6" fill="#fdfdfd" stroke="#c9c9c9" strokeWidth="2" />
    <circle cx="90" cy="88" r="75" fill="#fff" stroke={TEAL} strokeWidth="10" />
    <path
      d="M66 42v16M74 42v16M82 42v16M92 42v16M100 42v16M108 42v16M68 118v16M76 118v16M84 118v16M94 118v16M102 118v16M110 118v16"
      stroke={TEAL}
      strokeWidth="4"
    />
    <path
      d="M42 66h15M42 75h15M42 84h15M42 94h15M42 102h15M42 110h15M119 66h16M119 74h16M119 82h16M119 92h16M119 100h16M119 108h16"
      stroke={TEAL}
      strokeWidth="4"
    />
    <rect x="57" y="58" width="61" height="60" rx="4" fill="#fff" stroke={TEAL} strokeWidth="3" />
    <rect x="63" y="64" width="49" height="48" fill={TEAL} />
  </svg>
);

const GeneratedFile: React.FC<{ name: string }> = ({ name }) => (
  <div className="flex h-14 items-center gap-[26px] pl-[41px]">
    <Icon>
      <path d="M5 2h16l7 7v21H5z" fill="#fff" stroke={TEAL} strokeWidth="2" />
      <path d="M20 2v8h8" stroke={TEAL} strokeWidth="2" />
      <path d="M11 16c1-4 8-4 10 0l1-4M21 20c-1 4-8 4-10 0l-1 4" stroke={TEAL} strokeWidth="2" />
    </Icon>
    <a href="#file" className="text-[24px] leading-8 text-[#0f66c8]">{name}</a>
  </div>
);

const OverviewPane = () => (
  <Pane
    tabs={[
      { title: '概述', icon: <HomeIcon /> },
      { title: '代码预览', icon: <FileCIcon color={TEAL} /> },
      { title: '寄存器', icon: <RegisterTabIcon /> },
    ]}
  >
    <div className="flex min-h-0 flex-1 flex-col pt-1 pr-1.5 pb-1.5 pl-[5px]">
      <div className="flex min-h-0 flex-1">
        <div className="flex min-w-0 flex-1 flex-col gap-1 overflow-hidden pt-2.5 pr-0.5 pl-5">
          <Section title="配置 - 通用信息" open={false} />
          <Section title="配置 - 硬件信息" className="pb-2.5">
            <dl className="grid grid-cols-[153px_1fr] gap-x-4 text-[24px] leading-[44px]">
              {HARDWARE.map(([term, value]) => (
                <React.Fragment key={term}>
                  <dt className="text-right">{term}</dt>
                  <dd>{value}</dd>
                </React.Fragment>
              ))}
            </dl>
          </Section>
          <Section title="工程" open={false} className="mb-4" />
          <Section title="引脚" className="overflow-hidden pb-[18px]">
            <div className="flex gap-3 pt-2 pl-[38px]">
              <CpuBadge />
              <div className="-mt-1 flex flex-col justify-between">
                <p className="text-[22px] leading-8 whitespace-nowrap">
                  配置引脚路由，包括功能和电气引脚特性，电压
                  <br />
                  以及运行时引脚配置。
                </p>
                <label className="mb-1 ml-1.5 flex h-8 w-16">
                  <input type="checkbox" defaultChecked aria-label="引脚" className="peer sr-only" />
                  <span className="flex flex-1 justify-end rounded-full bg-[#00c000] p-1">
                    <span className="size-6 rounded-full bg-white" />
                  </span>
                </label>
              </div>
            </div>
          </Section>
          <Section title="生成代码" className="pb-2">
            <label className="flex h-[46px] items-center gap-[5px] pl-9 text-[24px] leading-8">
              <span className="relative flex size-[26px]">
                <input type="checkbox" defaultChecked className="size-[26px] appearance-none rounded-sm bg-[#005fb8]" />
                <svg viewBox="0 0 26 26" fill="none" className="pointer-events-none absolute inset-0" aria-hidden="true">
                  <path d="M7 13l4 4 8-8" stroke="#fff" strokeWidth="2" />
                </svg>
              </span>
              更新代码已启用
            </label>
            <GeneratedFile name="board\pin_mux.c" />
            <GeneratedFile name="board\pin_mux.h" />
          </Section>
          <Section title="功能组" className="mb-4 pb-2.5">
            <div className="flex h-14 items-center gap-[26px] pl-[41px]">
              <FlagIcon />
              <a href="#group" className="text-[24px] leading-8 text-[#0f66c8]">BOARD_InitPins</a>
            </div>
          </Section>
          <Section title="其它工具">
            <div className="flex gap-8 pt-[7px] pl-6">
              <button type="button" aria-label="Clocks tool" className="h-[175px] w-[179px] rounded-md border-2 border-[#c9c9c9] bg-white" />
              <button type="button" aria-label="Peripherals tool" className="h-[175px] w-[179px] rounded-md border-2 border-[#c9c9c9] bg-white" />
            </div>
          </Section>
        </div>
        <div className="w-8 shrink-0 bg-[#f0f0f0] pt-8">
          <div className="mx-auto h-[824px] w-1 bg-[#858585]" />
        </div>
      </div>
      <div className="mt-0.5 flex h-8 shrink-0 items-center bg-[#f0f0f0] pr-[176px] pl-[34px]">
        <div className="h-1 flex-1 bg-[#858585]" />
      </div>
    </div>
  </Pane>
);

/* ---------- problems ---------- */

const ProblemsPane = () => (
  <Pane
    tabs={[{ title: '问题', icon: <WarnIcon /> }]}
    actions={
      <>
        <Tool label="Hints"><BulbIcon /></Tool>
        <Tool label="Bold" active><BoldIcon /></Tool>
        <Tool label="Filter" active><FunnelIcon /></Tool>
      </>
    }
  >
    <div className="flex min-h-0 flex-1 flex-col px-4 pt-3.5 pb-4">
      <div className="flex shrink-0">
        <FilterBox id="problem-filter" />
      </div>
      <div className="mt-2.5 min-h-0 flex-1 overflow-hidden">
        <table className="w-full table-fixed border-separate border-spacing-0 text-[24px] leading-8">
          <colgroup>
            <col className="w-[200px]" />
            <col className="w-[400px]" />
            <col />
          </colgroup>
          <thead>
            <tr className="text-left">
              <th className="relative h-12 border-r-2 border-[#e0e0e0] pl-2.5 font-normal">
                级别
                <svg viewBox="0 0 16 8" fill="none" className="absolute top-0.5 left-[92px] h-2 w-4" aria-hidden="true">
                  <path d="M1 0l7 7 7-7" stroke="#666" strokeWidth="1.500" />
                </svg>
              </th>
              <th className="border-r-2 border-[#e0e0e0] pl-2.5 font-normal">资源</th>
              <th className="pl-2.5 font-normal">问题</th>
            </tr>
          </thead>
          <tbody>
            {[0, 1, 2, 3, 4].map((row) => (
              <tr key={row}>
                <td className="h-10 border-r-2 border-b-2 border-[#e0e0e0] bg-[#f7f7f7]" />
                <td className="border-r-2 border-b-2 border-[#e0e0e0]" />
                <td className="border-b-2 border-[#e0e0e0]" />
              </tr>
            ))}
          </tbody>
        </table>
      </div>
      <div className="mt-0.5 flex h-8 shrink-0 items-center bg-[#f0f0f0] pl-[34px]">
        <div className="h-1 w-[216px] bg-[#858585]" />
      </div>
    </div>
  </Pane>
);

/* ---------- routing details ---------- */

const ROUTE_HEADERS = [
  '#', '外设', '信号', '箭头', '已路由的...', '标签', '标识符', '电源组', '方向',
  'Interrupt ...', 'Interrupt ...', 'Lock Regi...', 'Pull Enable', 'Pull Select', 'D',
];

const SmallButton: React.FC<{ label: string; children: React.ReactNode }> = ({ label, children }) => (
  <button type="button" aria-label={label} className="flex h-11 w-11 items-center justify-center border-3 border-[#e6e6e6]">
    {children}
  </button>
);

const RoutingPane = () => (
  <section className="col-span-2 flex min-h-0 min-w-0 flex-col overflow-hidden rounded-xl border-2 border-[#c6c9cd] bg-white">
    <div className="flex h-[50px] shrink-0 bg-linear-to-b from-[#d3e2ef] to-[#cddced]">
      <div className="flex items-center rounded-tr-xl border-r-2 border-[#b4b9cc] bg-white pr-1.5 pl-[7px]">
        <RouteBoxIcon kind="routed" />
        <h2 className="ml-[7px] text-[24px] leading-8">路由详情</h2>
      </div>
      <div className="flex flex-1 items-center justify-end border-b-2 border-[#b4b9cc] pr-3.5">
        <Tool label="Legend"><NoteIcon /></Tool>
        <Tool label="Minimize"><MinIcon /></Tool>
        <Tool label="Maximize"><MaxIcon /></Tool>
      </div>
    </div>
    <div className="flex min-h-0 flex-1 flex-col px-3.5 pt-3 pb-2">
      <div className="flex shrink-0 items-center gap-[13px]">
        <button type="button" className="h-[50px] w-[69px] rounded-md border-2 border-[#005499] bg-[#cce4f7] p-1 text-[24px] leading-8">
          <span className="block border-2 border-dotted border-[#555]">引脚</span>
        </button>
        <button type="button" className="h-[50px] w-[69px] rounded-md border-2 border-[#005499] bg-[#cce4f7] text-[24px] leading-8">
          信号
        </button>
        <FilterBox id="route-filter" icon className="h-[54px] pb-1.5" />
      </div>
      <div className="mt-1.5 flex min-h-0 flex-1 flex-col border-2 border-[#a5a5ac] px-[11px] pt-3 pb-[15px]">
        <div className="flex h-[54px] shrink-0 items-center bg-[#b9cfe9] pl-2">
          <label htmlFor="route-count" className="w-[420px] text-[24px] leading-8">BOARD_InitPins 的 路由详情</label>
          <input
            id="route-count"
            type="text"
            defaultValue="0"
            className="h-[46px] w-[66px] border-2 border-[#ececec] border-b-[#838383] bg-white text-center text-[24px] leading-8 outline-none"
          />
          <div className="ml-3 flex gap-2.5">
            <SmallButton label="Add">
              <Icon>
                <circle cx="16" cy="16" r="16" fill={TEAL} />
                <path d="M16 8v16M8 16h16" stroke="#fff" strokeWidth="4" />
              </Icon>
            </SmallButton>
            <SmallButton label="Remove">
              <Icon>
                <circle cx="16" cy="16" r="16" fill="#a9b3c1" />
                <path d="M8 8l16 16M24 8L8 24" stroke="#dfe6ef" strokeWidth="3" />
              </Icon>
            </SmallButton>
            <SmallButton label="Up">
              <Icon><path d="M6 21L16 10l10 11" stroke="#a3b2c6" strokeWidth="4" /></Icon>
            </SmallButton>
            <SmallButton label="Down">
              <Icon><path d="M6 11l10 11 10-11" stroke="#a3b2c6" strokeWidth="4" /></Icon>
            </SmallButton>
          </div>
        </div>
        <div className="flex min-h-0 flex-1 flex-col border-2 border-t-0 border-[#b9cfe9] pl-0.5">
          <div className="min-h-0 flex-1 overflow-hidden">
            <table className="w-full table-fixed border-separate border-spacing-0 text-[24px] leading-8">
              <colgroup>
                {ROUTE_HEADERS.map((header, i) => (
                  <col key={i} className={i === 3 ? 'w-20' : i === 14 ? '' : 'w-40'} />
                ))}
              </colgroup>
              <thead>
                <tr className="text-left">
                  {ROUTE_HEADERS.map((header, i) => (
                    <th key={i} className="h-12 overflow-hidden border-r-2 border-[#e2e2e2] pb-0.5 pl-3 font-normal whitespace-nowrap last:border-r-0">
                      {header}
                    </th>
                  ))}
                </tr>
              </thead>
              <tbody>
                {[0, 1, 2, 3, 4, 5].map((row) => (
                  <tr key={row}>
                    {ROUTE_HEADERS.map((header, i) => (
                      <td key={i} className="h-[42px] border-r-2 border-b-2 border-[#f0f0f0] last:border-r-0" />
                    ))}
                  </tr>
                ))}
              </tbody>
            </table>
          </div>
          <div className="flex h-8 shrink-0 items-center bg-[#f0f0f0] pr-[500px] pl-[34px]">
            <div className="h-1 flex-1 bg-[#858585]" />
          </div>
        </div>
      </div>
    </div>
  </section>
);

const StatusBar = () => (
  <footer className="flex h-[45px] shrink-0 items-center text-[24px] leading-8">
    <span className="flex-1 pb-0.5 pl-1">demo01</span>
    <Handle />
    <div className="flex h-[41px] w-[284px] items-center justify-center self-end border-t-2 border-r-2 border-[#a0a0a0] bg-linear-to-r from-[#a0a0a0] from-[152px] to-[#f0f0f0] to-[152px]">
      770M of 1456M
    </div>
    <button type="button" aria-label="Run garbage collector" className="ml-0.5 flex size-8 items-center justify-center">
      <Icon className="size-7">
        <path d="M11 5V1h10v4M3 6h26" stroke="#5677a8" strokeWidth="2.500" />
        <path d="M6 8h20v21H6z" fill="#b5cbe6" stroke="#5677a8" strokeWidth="2.500" />
        <path d="M12 10v17M16 10v17M20 10v17" stroke="#5677a8" strokeWidth="2" />
      </Icon>
    </button>
    <Handle />
    <span className="w-[554px] shrink-0" />
  </footer>
);

const SideTrim = () => (
  <aside className="flex flex-col items-center gap-6 pt-[3px]">
    <span className="flex gap-1.5">
      <span className="size-[3px] bg-[#8d8878]" />
      <span className="size-[3px] bg-[#8d8878]" />
      <span className="size-[3px] bg-[#8d8878]" />
      <span className="size-[3px] bg-[#8d8878]" />
    </span>
    <button type="button" aria-label="Restore view" className="pr-2">
      <svg viewBox="0 0 20 20" className="size-5" fill="#fff">
        <rect x="7" y="2" width="10" height="8" stroke="#6b6258" strokeWidth="3" />
        <rect x="2" y="9" width="10" height="8" stroke="#6b6258" strokeWidth="3" />
      </svg>
    </button>
    <button type="button" aria-label="Outline" className="pr-2">
      <svg viewBox="0 0 24 24" className="size-6">
        <rect x="1" y="1" width="22" height="22" fill="#f4fbff" stroke="#8a744a" strokeWidth="2" />
        <rect width="24" height="6" fill="#4b8fd0" />
      </svg>
    </button>
  </aside>
);

export default function App() {
  return (
    <div className="relative flex h-screen flex-col overflow-hidden bg-[#e0e6f6] font-['Open_Sans','Noto_Sans_CJK_SC',sans-serif] text-black">
      <TitleBar />
      <MenuBar />
      <MainToolbar />
      <PerspectiveBar />
      <main className="grid min-h-0 flex-1 grid-cols-[minmax(0,2258fr)_minmax(0,753fr)_31px] gap-x-2.5">
        <div className="grid min-h-0 grid-cols-[minmax(0,1123fr)_minmax(0,1125fr)] grid-rows-[minmax(0,1030fr)_minmax(0,530fr)] gap-x-2.5 gap-y-2">
          <PinsPane />
          <PackagePane />
          <RoutingPane />
        </div>
        <div className="grid min-h-0 grid-rows-[minmax(0,1170fr)_minmax(0,390fr)] gap-y-2">
          <OverviewPane />
          <ProblemsPane />
        </div>
        <SideTrim />
      </main>
      <StatusBar />
      <p className="pointer-events-none absolute right-1 bottom-3 font-['Noto_Sans_CJK_SC',sans-serif] text-[61px] leading-[72px] font-light whitespace-nowrap text-white/60 [text-shadow:1px_1px_2px_rgba(0,0,0,0.35)]">
        CSDN @上层精灵的赞美诗
      </p>
    </div>
  );
}
